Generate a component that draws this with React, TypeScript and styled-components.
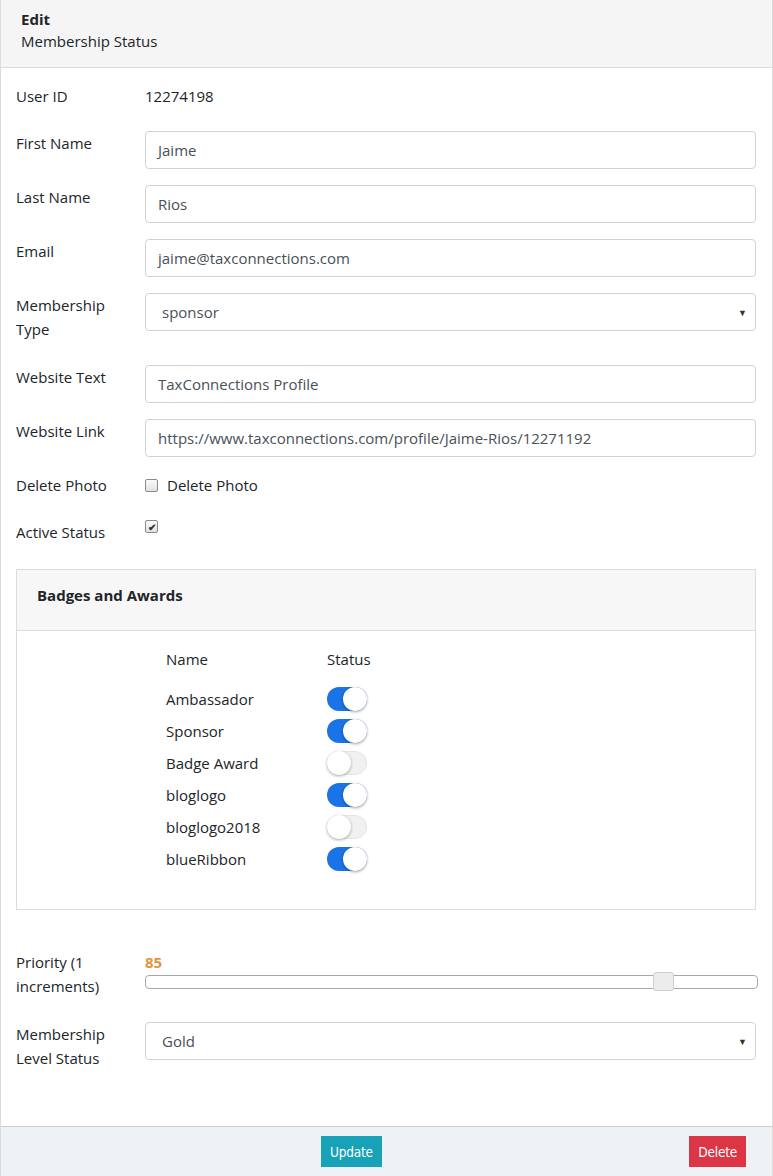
import React from "react";
import styled, { createGlobalStyle } from "styled-components";

const Global = createGlobalStyle`
  html, body { margin: 0; padding: 0; background: #fff; }
  body { font-family: "Open Sans", "Noto Sans", sans-serif; color: #212529; font-size: 15px; }
  * { box-sizing: border-box; }
`;

const Page = styled.div`
  width: 773px;
  min-height: 1176px;
  border-left: 1px solid #dcdcdc;
  border-right: 1px solid #dcdcdc;
  display: flex;
  flex-direction: column;
`;

const Header = styled.div`
  background: #f5f5f5;
  border-bottom: 1px solid #dcdcdc;
  height: 68px;
  padding: 8px 20px 0;
  line-height: 22px;
`;

const HeaderTitle = styled.div`
  font-weight: 700;
`;

const Body = styled.div`
  padding: 16px 16px 0 15px;
  flex: 1;
`;

const Row = styled.div<{ $mb?: number; $mt?: number }>`
  display: flex;
  align-items: flex-start;
  margin-top: ${(p) => (p.$mt ?? 0)}px;
  margin-bottom: ${(p) => (p.$mb ?? 16)}px;
`;

const Label = styled.div`
  width: 129px;
  flex-shrink: 0;
  padding-right: 20px;
  line-height: 24px;
`;

const Value = styled.div`
  line-height: 24px;
`;

const Input = styled.div`
  flex: 1;
  height: 38px;
  border: 1px solid #cfd3d7;
  border-radius: 4px;
  padding: 0 12px;
  display: flex;
  align-items: center;
  color: #495057;
`;

const Select = styled(Input)`
  padding-left: 16px;
  justify-content: space-between;
`;

const Caret = styled.span`
  font-size: 9px;
  color: #333;
  margin-right: -4px;
`;

const CheckRow = styled.div`
  display: flex;
  align-items: center;
  gap: 9px;
  line-height: 24px;
`;

const Check = styled.span`
  width: 13px;
  height: 13px;
  border: 1px solid #8a8a8a;
  border-radius: 2px;
  background: linear-gradient(#fafafa, #e2e2e2);
  display: inline-flex;
  align-items: center;
  justify-content: center;
  font-size: 10px;
  font-weight: 700;
  color: #333;
  line-height: 1;
`;

const Card = styled.div`
  border: 1px solid #dcdcdc;
`;

const CardHeader = styled.div`
  background: #f7f7f7;
  border-bottom: 1px solid #dcdcdc;
  height: 61px;
  padding: 14px 20px 0;
  font-weight: 700;
  line-height: 22px;
`;

const CardBody = styled.div`
  height: 278px;
  padding: 16px 0 0 149px;
`;

const Table = styled.div`
  display: grid;
  grid-template-columns: 161px 60px;
  grid-template-rows: 36px;
  grid-auto-rows: 32px;
`;

const Th = styled.div`
  line-height: 24px;
`;

const Td = styled.div`
  line-height: 24px;
  display: flex;
  align-items: center;
  height: 32px;
`;

const Toggle = styled.span<{ $on: boolean }>`
  position: relative;
  width: 40px;
  height: 24px;
  border-radius: 12px;
  background: ${(p) => (p.$on ? "#1b73e8" : "#f1f1f1")};
  border: ${(p) => (p.$on ? "none" : "1px solid #e6e6e6")};
  display: inline-block;
  &::after {
    content: "";
    position: absolute;
    top: ${(p) => (p.$on ? "0" : "-1px")};
    left: ${(p) => (p.$on ? "16px" : "-1px")};
    width: 24px;
    height: 24px;
    border-radius: 50%;
    background: #fff;
    box-shadow: 0 1px 3px rgba(0, 0, 0, 0.35);
  }
`;

const PriorityWrap = styled.div`
  flex: 1;
`;

const PriorityValue = styled.div`
  color: #e0953a;
  font-weight: 700;
  line-height: 24px;
  height: 25px;
`;

const Track = styled.div`
  position: relative;
  height: 14px;
  margin-right: -2px;
  border: 1px solid #a8a8a8;
  border-radius: 4px;
  background: #fff;
`;

const Thumb = styled.div`
  position: absolute;
  top: -4px;
  width: 21px;
  height: 19px;
  border: 1px solid #cfcfcf;
  border-radius: 3px;
  background: #ececec;
`;

const Footer = styled.div`
  background: #eef2f5;
  border-top: 1px solid #c8cdd2;
  height: 50px;
  display: flex;
  align-items: center;
  padding: 0 26px 0 320px;
`;

const Btn = styled.button<{ $bg: string; $push?: boolean }>`
  background: ${(p) => p.$bg};
  color: #fff;
  border: none;
  height: 31px;
  padding: 0 9px;
  margin-left: ${(p) => (p.$push ? "auto" : "0")};
  font-family: "DejaVu Sans Condensed", "Liberation Sans Narrow", sans-serif;
  font-stretch: condensed;
  font-size: 13.5px;
  letter-spacing: -0.2px;
`;

const badges: [string, boolean][] = [
  ["Ambassador", true],
  ["Sponsor", true],
  ["Badge Award", false],
  ["bloglogo", true],
  ["bloglogo2018", false],
  ["blueRibbon", true],
];

export default function App() {
  return (
    <>
      <Global />
      <Page>
        <Header>
          <HeaderTitle>Edit</HeaderTitle>
          <div>Membership Status</div>
        </Header>
        <Body>
          <Row $mb={23}>
            <Label>User ID</Label>
            <Value>12274198</Value>
          </Row>
          <Row>
            <Label>First Name</Label>
            <Input>Jaime</Input>
          </Row>
          <Row>
            <Label>Last Name</Label>
            <Input>Rios</Input>
          </Row>
          <Row>
            <Label>Email</Label>
            <Input>jaime@taxconnections.com</Input>
          </Row>
          <Row $mb={24}>
            <Label>Membership Type</Label>
            <Select>
              <span>sponsor</span>
              <Caret>▼</Caret>
            </Select>
          </Row>
          <Row>
            <Label>Website Text</Label>
            <Input>TaxConnections Profile</Input>
          </Row>
          <Row $mb={16}>
            <Label>Website Link</Label>
            <Input>https://www.taxconnections.com/profile/Jaime-Rios/12271192</Input>
          </Row>
          <Row $mb={23}>
            <Label>Delete Photo</Label>
            <CheckRow>
              <Check />
              <span>Delete Photo</span>
            </CheckRow>
          </Row>
          <Row $mb={25}>
            <Label>Active Status</Label>
            <CheckRow>
              <Check>✔</Check>
            </CheckRow>
          </Row>
          <Card>
            <CardHeader>Badges and Awards</CardHeader>
            <CardBody>
              <Table>
                <Th>Name</Th>
                <Th>Status</Th>
                {badges.map(([n, on]) => (
                  <React.Fragment key={n}>
                    <Td>{n}</Td>
                    <Td>
                      <Toggle $on={on} />
                    </Td>
                  </React.Fragment>
                ))}
              </Table>
            </CardBody>
          </Card>
          <Row $mt={40} $mb={24}>
            <Label>Priority (1 increments)</Label>
            <PriorityWrap>
              <PriorityValue>85</PriorityValue>
              <Track>
                <Thumb style={{ left: `${(85 / 100) * 100}%`, marginLeft: -12 }} />
              </Track>
            </PriorityWrap>
          </Row>
          <Row>
            <Label>Membership Level Status</Label>
            <Select>
              <span>Gold</span>
              <Caret>▼</Caret>
            </Select>
          </Row>
        </Body>
        <Footer>
          <Btn $bg="#17a2b8">Update</Btn>
          <Btn $bg="#dc3545" $push>Delete</Btn>
        </Footer>
      </Page>
    </>
  );
}
